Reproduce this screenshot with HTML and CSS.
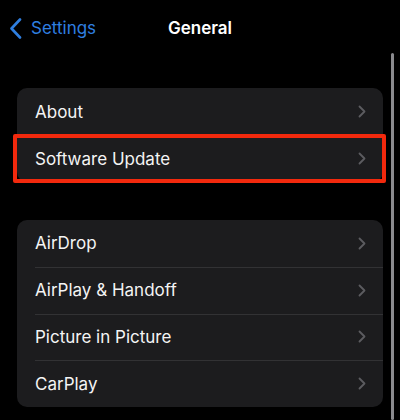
FILE: index.html
```html
<!DOCTYPE html>
<html>
<head>
<meta charset="utf-8">
<link rel="stylesheet" href="styles.css">
</head>
<body>
<div class="screen">
  <header class="nav">
    <div class="back">
      <svg class="back-icon" width="13" height="21" viewBox="0 0 13 21"><path d="M11 1.5 L2.5 10.5 L11 19.5" fill="none" stroke="#2f7fe0" stroke-width="2.6" stroke-linecap="round" stroke-linejoin="round"/></svg>
      <span class="back-label">Settings</span>
    </div>
    <div class="title">General</div>
  </header>

  <section class="group first">
    <div class="row"><span class="label">About</span><svg class="chev" width="8" height="13" viewBox="0 0 8 13"><path d="M1.5 1.5 L6.5 6.5 L1.5 11.5" fill="none" stroke="#5c5c60" stroke-width="1.8" stroke-linecap="round" stroke-linejoin="round"/></svg></div>
    <div class="row highlighted"><span class="label">Software Update</span><svg class="chev" width="8" height="13" viewBox="0 0 8 13"><path d="M1.5 1.5 L6.5 6.5 L1.5 11.5" fill="none" stroke="#5c5c60" stroke-width="1.8" stroke-linecap="round" stroke-linejoin="round"/></svg><div class="mark"></div></div>
  </section>

  <section class="group second">
    <div class="row"><span class="label">AirDrop</span><svg class="chev" width="8" height="13" viewBox="0 0 8 13"><path d="M1.5 1.5 L6.5 6.5 L1.5 11.5" fill="none" stroke="#5c5c60" stroke-width="1.8" stroke-linecap="round" stroke-linejoin="round"/></svg></div>
    <div class="row"><span class="label">AirPlay &amp; Handoff</span><svg class="chev" width="8" height="13" viewBox="0 0 8 13"><path d="M1.5 1.5 L6.5 6.5 L1.5 11.5" fill="none" stroke="#5c5c60" stroke-width="1.8" stroke-linecap="round" stroke-linejoin="round"/></svg></div>
    <div class="row"><span class="label">Picture in Picture</span><svg class="chev" width="8" height="13" viewBox="0 0 8 13"><path d="M1.5 1.5 L6.5 6.5 L1.5 11.5" fill="none" stroke="#5c5c60" stroke-width="1.8" stroke-linecap="round" stroke-linejoin="round"/></svg></div>
    <div class="row"><span class="label">CarPlay</span><svg class="chev" width="8" height="13" viewBox="0 0 8 13"><path d="M1.5 1.5 L6.5 6.5 L1.5 11.5" fill="none" stroke="#5c5c60" stroke-width="1.8" stroke-linecap="round" stroke-linejoin="round"/></svg></div>
  </section>

  <div class="scrollbar"></div>
</div>
</body>
</html>
```
FILE: styles.css
```css
html, body {
  margin: 0;
  padding: 0;
  background: #000;
}
.screen {
  position: relative;
  width: 400px;
  height: 420px;
  overflow: hidden;
  background: #000;
  font-family: Inter, "Liberation Sans", sans-serif;
  color: #f4f4f4;
}
.nav {
  position: relative;
  height: 56px;
  display: flex;
  align-items: center;
}
.back {
  display: flex;
  align-items: center;
  gap: 9px;
  padding-left: 9px;
  color: #2f7fe0;
  font-size: 17px;
  margin-top: 0;
}
.back-icon {
  display: block;
}
.title {
  position: absolute;
  left: 0;
  right: 0;
  top: 0;
  height: 56px;
  line-height: 56px;
  text-align: center;
  font-size: 17px;
  font-weight: 600;
  color: #fff;
  pointer-events: none;
}
.group {
  margin: 0 17px;
  background: #1c1c1e;
  border-radius: 10px;
}
.group.first {
  margin-top: 32px;
}
.group.second {
  margin-top: 38px;
}
.row {
  position: relative;
  height: 47px;
  display: flex;
  align-items: center;
  justify-content: space-between;
  padding: 0 17px 0 18px;
  font-size: 17px;
}
.group.second .row {
  height: 46.75px;
}
.row + .row::before {
  content: "";
  position: absolute;
  top: 0;
  left: 18px;
  right: 0;
  height: 1px;
  background: #323234;
}
.chev {
  display: block;
}
.mark {
  position: absolute;
  top: -1px;
  bottom: -1px;
  left: -4px;
  right: -3px;
  border: 4px solid #f2290d;
  border-radius: 2px;
}
.scrollbar {
  position: absolute;
  left: 391px;
  top: 53px;
  bottom: 0;
  width: 3px;
  border-radius: 2px;
  background: #8a8a8e;
}
```
